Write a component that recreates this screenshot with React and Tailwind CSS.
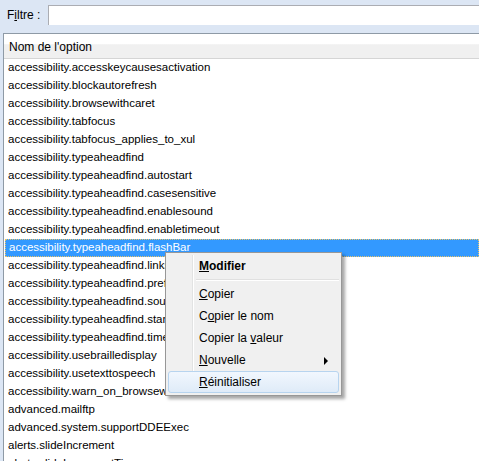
import { useState } from "react";

const prefs = [
  "accessibility.accesskeycausesactivation",
  "accessibility.blockautorefresh",
  "accessibility.browsewithcaret",
  "accessibility.tabfocus",
  "accessibility.tabfocus_applies_to_xul",
  "accessibility.typeaheadfind",
  "accessibility.typeaheadfind.autostart",
  "accessibility.typeaheadfind.casesensitive",
  "accessibility.typeaheadfind.enablesound",
  "accessibility.typeaheadfind.enabletimeout",
  "accessibility.typeaheadfind.flashBar",
  "accessibility.typeaheadfind.linksonly",
  "accessibility.typeaheadfind.prefillwithselection",
  "accessibility.typeaheadfind.soundURL",
  "accessibility.typeaheadfind.startlinksonly",
  "accessibility.typeaheadfind.timeout",
  "accessibility.usebrailledisplay",
  "accessibility.usetexttospeech",
  "accessibility.warn_on_browsewithcaret",
  "advanced.mailftp",
  "advanced.system.supportDDEExec",
  "alerts.slideIncrement",
  "alerts.slideIncrementTime",
];

const MenuItem = ({ children, active, arrow, bold }) => (
  <div
    className={`relative flex items-center h-[22px] pl-[30px] ${bold ? "font-bold" : ""} ${
      active
        ? "rounded-[3px] border border-[#b7d4ef] bg-gradient-to-b from-[#f1f7fe] to-[#dfebf8]"
        : "border border-transparent"
    }`}
  >
    <span>{children}</span>
    {arrow && (
      <span className="absolute right-[10px] top-[7px] w-0 h-0 border-y-[4px] border-y-transparent border-l-[4px] border-l-black" />
    )}
  </div>
);

const ContextMenu = () => (
  <div className="absolute left-[165px] top-[252px] w-[177px] border border-[#979797] bg-[#f0f0f0] p-[2px] text-[12px] text-black shadow-[3px_3px_3px_rgba(0,0,0,0.35)]">
    <div className="absolute left-[26px] top-[2px] bottom-[2px] w-[2px] border-l border-[#e2e3e3] bg-white" />
    <MenuItem bold>
      <u>M</u>odifier
    </MenuItem>
    <div className="h-[6px] flex items-center pl-[28px]">
      <div className="w-full h-[2px] border-t border-[#e0e0e0] bg-white" />
    </div>
    <MenuItem>
      <u>C</u>opier
    </MenuItem>
    <MenuItem>
      C<u>o</u>pier le nom
    </MenuItem>
    <MenuItem>
      Copier la <u>v</u>aleur
    </MenuItem>
    <MenuItem arrow>
      <u>N</u>ouvelle
    </MenuItem>
    <MenuItem active>
      <u>R</u>éinitialiser
    </MenuItem>
  </div>
);

export default function App() {
  const [filter, setFilter] = useState("");
  const [selected] = useState(10);

  return (
    <div
      className="relative w-[479px] h-[461px] overflow-hidden bg-[#dce6f4] text-black"
      style={{ fontFamily: '"Liberation Sans", Arial, sans-serif' }}
    >
      <div className="flex items-center pt-[5px] h-[25px]">
        <label className="w-[48px] pl-[7px] text-[12px]">
          F<u>i</u>ltre :
        </label>
        <input
          value={filter}
          onChange={(e) => setFilter(e.target.value)}
          className="flex-1 h-[20px] bg-white border-t border-l border-[#abadb3] outline-none"
        />
      </div>
      <div className="ml-[3px] mt-[8px] border-t border-l border-[#8e9aa6] bg-white h-[430px]">
        <div className="h-[25px] flex items-center pl-[5px] pt-[2px] text-[12px] border-b border-[#d5d5d5] bg-gradient-to-b from-white from-40% to-[#f0f0f0] to-45%">
          Nom de l&apos;option
        </div>
        <div className="text-[11.5px]">
          {prefs.map((p, i) => (
            <div
              key={p}
              className={`h-[18px] flex items-center pl-[4px] ${
                i === selected
                  ? "ml-[1px] bg-[#3399ff] text-white outline-1 outline-dotted outline-[#e8c36a] -outline-offset-1"
                  : ""
              }`}
            >
              {p}
            </div>
          ))}
        </div>
      </div>
      <ContextMenu />
    </div>
  );
}
